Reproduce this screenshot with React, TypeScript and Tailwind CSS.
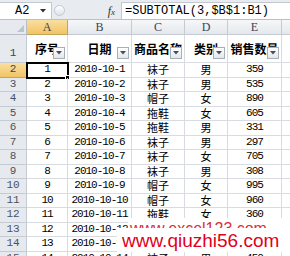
const rows: [string, string, string, string, string][] = [
  ['1', '2010-10-1', '袜子', '男', '359'],
  ['2', '2010-10-2', '袜子', '男', '535'],
  ['3', '2010-10-3', '帽子', '女', '890'],
  ['4', '2010-10-4', '拖鞋', '女', '605'],
  ['5', '2010-10-5', '拖鞋', '男', '331'],
  ['6', '2010-10-6', '袜子', '男', '297'],
  ['7', '2010-10-7', '袜子', '女', '705'],
  ['8', '2010-10-8', '袜子', '男', '308'],
  ['9', '2010-10-9', '帽子', '女', '995'],
  ['10', '2010-10-10', '帽子', '女', '960'],
  ['11', '2010-10-11', '拖鞋', '女', '360'],
  ['12', '2010-10-12', '袜子', '男', '412'],
  ['13', '2010-10-13', '帽子', '女', '588'],
  ['14', '2010-10-14', '袜子', '男', '450'],
]

const mono = "font-['Liberation_Mono',monospace]"
const cjk = "font-['Noto_Sans_CJK_SC',sans-serif]"
const num = `${mono} text-[11px] tracking-[-1px] leading-none`

function FilterBtn() {
  return (
    <span className="absolute right-[2px] bottom-[3px] w-[12px] h-[12px] border border-[#a7afb9] bg-gradient-to-b from-white to-[#e3e7ec] flex items-center justify-center">
      <svg width="6" height="4" viewBox="0 0 6 4">
        <path d="M0 0h6L3 3.5z" fill="#4a4f57" />
      </svg>
    </span>
  )
}

function HeadCell({ w, label }: { w: string; label: string }) {
  return (
    <div className={`${w} relative h-full border-r border-b border-[#d8dbe0] flex items-center justify-center overflow-hidden`}>
      <span className={`${cjk} text-[12px] font-bold text-black whitespace-nowrap leading-none`}>{label}</span>
      <FilterBtn />
    </div>
  )
}

export default function App() {
  return (
    <div className="w-[290px] h-[256px] overflow-hidden bg-white relative">
      {/* formula bar */}
      <div className="h-[20px] bg-[#e8ecf1] border-b border-[#b9c0c9] flex items-end">
        <div className="w-[52px] h-[17px] bg-white border-t border-r border-[#c3c8cf] flex items-center">
          <span className={`${mono} text-[12px] text-black pl-[15px] leading-none`}>A2</span>
          <svg width="6" height="4" viewBox="0 0 6 4" className="ml-[11px]">
            <path d="M0 0h6L3 3.5z" fill="#333" />
          </svg>
        </div>
        <div className="w-[14px] h-[17px] flex items-center justify-center">
          <span className="w-[11px] h-[11px] rounded-full border border-[#c4c9d0] bg-gradient-to-b from-white to-[#dfe3e8]" />
        </div>
        <div className="w-[55px] h-[17px] flex items-center justify-end pr-[6px]">
          <span className="font-['Liberation_Serif',serif] italic text-[12px] text-[#333] leading-none">
            f<span className="text-[9px]">x</span>
          </span>
        </div>
        <div className="flex-1 h-[17px] bg-white border-t border-l border-[#c3c8cf] flex items-center">
          <span className={`${mono} text-[12px] text-black pl-[3px] leading-none whitespace-nowrap`}>=SUBTOTAL(3,$B$1:B1)</span>
        </div>
      </div>

      {/* column headers */}
      <div className="h-[15px] flex font-['Liberation_Serif',serif] text-[12px] text-[#3c4450]">
        <div className="w-[27px] h-full bg-[#e6e9ee] border-r border-b border-[#b8bfc9] flex items-end justify-end p-[2px]">
          <svg width="7" height="7" viewBox="0 0 7 7">
            <path d="M7 0V7H0z" fill="#bcc3cc" />
          </svg>
        </div>
        <div className="w-[41px] h-full bg-gradient-to-b from-[#f9dfa0] to-[#f1c462] border-r border-b border-[#c3a45a] flex items-center justify-center">A</div>
        <div className="w-[64px] h-full bg-gradient-to-b from-[#f6f7f9] to-[#e4e8ed] border-r border-b border-[#c5cbd3] flex items-center justify-center">B</div>
        <div className="w-[53px] h-full bg-gradient-to-b from-[#f6f7f9] to-[#e4e8ed] border-r border-b border-[#c5cbd3] flex items-center justify-center">C</div>
        <div className="w-[43px] h-full bg-gradient-to-b from-[#f6f7f9] to-[#e4e8ed] border-r border-b border-[#c5cbd3] flex items-center justify-center">D</div>
        <div className="w-[54px] h-full bg-gradient-to-b from-[#f6f7f9] to-[#e4e8ed] border-r border-b border-[#c5cbd3] flex items-center justify-center">E</div>
        <div className="flex-1 h-full bg-gradient-to-b from-[#f6f7f9] to-[#e4e8ed] border-b border-[#c5cbd3]" />
      </div>

      {/* row 1: headers */}
      <div className="h-[28px] flex">
        <div className={`w-[27px] h-full bg-[#e6e9ee] border-r border-b border-[#c5cbd3] flex items-end justify-center pb-[3px] ${mono} text-[11px] text-[#3c4450] leading-none`}>1</div>
        <HeadCell w="w-[41px]" label="序号" />
        <HeadCell w="w-[64px]" label="日期" />
        <HeadCell w="w-[53px]" label="商品名称" />
        <HeadCell w="w-[43px]" label="类别" />
        <HeadCell w="w-[54px]" label="销售数量" />
        <div className="flex-1 h-full border-b border-[#d8dbe0]" />
      </div>

      {/* data rows */}
      {rows.map((r, i) => (
        <div key={i} className="h-[14.5px] flex text-black">
          <div
            className={`w-[27px] h-full border-r border-b flex items-center justify-center ${mono} text-[11px] leading-none ${
              i === 0 ? 'bg-gradient-to-b from-[#f9dfa0] to-[#f1c462] border-[#c3a45a] text-[#3c4450]' : 'bg-[#e6e9ee] border-[#c5cbd3] text-[#4a5260]'
            }`}
          >
            {i + 2}
          </div>
          <div
            className={`w-[41px] h-full border-r border-b border-[#d8dbe0] flex items-center justify-center ${num} relative ${
              i === 0 ? 'outline-2 outline-black -outline-offset-1' : ''
            }`}
          >
            {r[0]}
            {i === 0 && <span className="absolute -right-[3px] -bottom-[3px] w-[5px] h-[5px] bg-black border border-white" />}
          </div>
          <div className={`w-[64px] h-full border-r border-b border-[#d8dbe0] flex items-center justify-center ${num}`}>{r[1]}</div>
          <div className={`w-[53px] h-full border-r border-b border-[#d8dbe0] flex items-center justify-center ${cjk} text-[11px] leading-none`}>{r[2]}</div>
          <div className={`w-[43px] h-full border-r border-b border-[#d8dbe0] flex items-center justify-center ${cjk} text-[11px] leading-none`}>{r[3]}</div>
          <div className={`w-[54px] h-full border-r border-b border-[#d8dbe0] flex items-center justify-center ${num}`}>{r[4]}</div>
          <div className="flex-1 h-full border-b border-[#d8dbe0]" />
        </div>
      ))}

      {/* watermarks */}
      <div className="absolute left-[128px] top-[218px] w-[162px] h-[12px] bg-white overflow-hidden">
        <span className="block font-['Liberation_Sans',sans-serif] text-[16px] leading-none text-[#d9303a] whitespace-nowrap pl-[2px] pt-[3px]">
          www.excel123.com
        </span>
      </div>
      <div className="absolute left-[117px] top-[228px] w-[173px] h-[24px] bg-white flex items-center pl-[5px]">
        <span className="font-['Liberation_Sans',sans-serif] text-[19px] leading-none text-[#e2001a] whitespace-nowrap">
          www.qiuzhi56.com
        </span>
      </div>
    </div>
  )
}
